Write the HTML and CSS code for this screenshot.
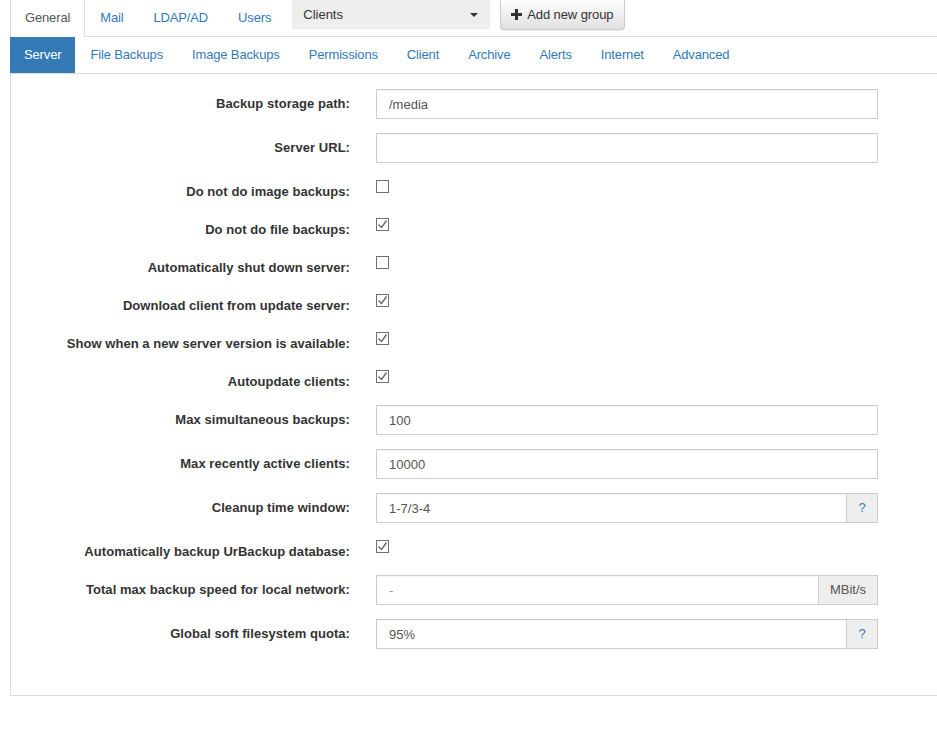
FILE: index.html
```html
<!DOCTYPE html>
<html lang="en">
<head>
    <meta charset="UTF-8">
    <title>UrBackup - Settings</title>
    <link rel="stylesheet" href="styles.css">
</head>
<body>

<div class="top_nav">
    <ul class="tabs">
        <li class="active"><a href="#">General</a></li>
        <li><a href="#">Mail</a></li>
        <li><a href="#">LDAP/AD</a></li>
        <li><a href="#">Users</a></li>
    </ul>
    <div class="group_select">Clients<span class="caret"></span></div>
    <button type="button" class="btn_add">
        <svg class="plus" width="11" height="11" viewBox="0 0 11 11"><path d="M4 0h3v4h4v3H7v4H4V7H0V4h4z" fill="#333"/></svg>
        Add new group
    </button>
</div>

<ul class="pills">
    <li class="active"><a href="#">Server</a></li>
    <li><a href="#">File Backups</a></li>
    <li><a href="#">Image Backups</a></li>
    <li><a href="#">Permissions</a></li>
    <li><a href="#">Client</a></li>
    <li><a href="#">Archive</a></li>
    <li><a href="#">Alerts</a></li>
    <li><a href="#">Internet</a></li>
    <li><a href="#">Advanced</a></li>
</ul>

<div class="panel">
    <form class="settings">
        <div class="field">
            <label>Backup storage path:</label>
            <input type="text" class="text_input" value="/media">
        </div>
        <div class="field">
            <label>Server URL:</label>
            <input type="text" class="text_input" value="">
        </div>
        <div class="field check_row">
            <label>Do not do image backups:</label>
            <span class="check"></span>
        </div>
        <div class="field check_row">
            <label>Do not do file backups:</label>
            <span class="check"><svg width="11" height="11" viewBox="0 0 11 11"><path d="M1.5 5.5l3 3 5-7" fill="none" stroke="#666" stroke-width="1.4"/></svg></span>
        </div>
        <div class="field check_row">
            <label>Automatically shut down server:</label>
            <span class="check"></span>
        </div>
        <div class="field check_row">
            <label>Download client from update server:</label>
            <span class="check"><svg width="11" height="11" viewBox="0 0 11 11"><path d="M1.5 5.5l3 3 5-7" fill="none" stroke="#666" stroke-width="1.4"/></svg></span>
        </div>
        <div class="field check_row">
            <label>Show when a new server version is available:</label>
            <span class="check"><svg width="11" height="11" viewBox="0 0 11 11"><path d="M1.5 5.5l3 3 5-7" fill="none" stroke="#666" stroke-width="1.4"/></svg></span>
        </div>
        <div class="field check_row">
            <label>Autoupdate clients:</label>
            <span class="check"><svg width="11" height="11" viewBox="0 0 11 11"><path d="M1.5 5.5l3 3 5-7" fill="none" stroke="#666" stroke-width="1.4"/></svg></span>
        </div>
        <div class="field">
            <label>Max simultaneous backups:</label>
            <input type="text" class="text_input" value="100">
        </div>
        <div class="field">
            <label>Max recently active clients:</label>
            <input type="text" class="text_input" value="10000">
        </div>
        <div class="field">
            <label>Cleanup time window:</label>
            <div class="input_group">
                <input type="text" class="text_input" value="1-7/3-4">
                <span class="addon help">?</span>
            </div>
        </div>
        <div class="field check_row">
            <label>Automatically backup UrBackup database:</label>
            <span class="check"><svg width="11" height="11" viewBox="0 0 11 11"><path d="M1.5 5.5l3 3 5-7" fill="none" stroke="#666" stroke-width="1.4"/></svg></span>
        </div>
        <div class="field">
            <label>Total max backup speed for local network:</label>
            <div class="input_group">
                <input type="text" class="text_input dim" value="-">
                <span class="addon">MBit/s</span>
            </div>
        </div>
        <div class="field">
            <label>Global soft filesystem quota:</label>
            <div class="input_group">
                <input type="text" class="text_input" value="95%">
                <span class="addon help">?</span>
            </div>
        </div>
    </form>
</div>

</body>
</html>
```

FILE: styles.css
```css
body {
    margin: 0;
    padding-left: 10px;
    font-family: "Liberation Sans", Arial, sans-serif;
    font-size: 13px;
    color: #333;
    background: #fff;
    overflow: hidden;
}

a {
    color: #337ab7;
    text-decoration: none;
}

ul {
    list-style: none;
    margin: 0;
    padding: 0;
}

/* top row: tabs, group select, add button */
.top_nav {
    display: flex;
    align-items: flex-start;
    height: 36px;
    border-bottom: 1px solid #ddd;
}

.tabs {
    display: flex;
}

.tabs li a {
    display: block;
    height: 36px;
    line-height: 36px;
    padding: 0 15px;
    letter-spacing: -0.15px;
}

.tabs li.active a {
    color: #555;
    background: #fff;
    border: 1px solid #ddd;
    border-top: none;
    border-bottom: none;
    height: 37px;
    padding: 0 14px;
}

.group_select {
    position: relative;
    width: 187px;
    height: 29px;
    line-height: 29px;
    margin-left: 6px;
    padding-left: 11px;
    background: #eee;
    color: #333;
}

.caret {
    position: absolute;
    right: 12px;
    top: 13px;
    border-top: 4px solid #333;
    border-left: 4px solid transparent;
    border-right: 4px solid transparent;
}

.btn_add {
    display: flex;
    align-items: center;
    gap: 5px;
    height: 30px;
    margin-left: 10px;
    padding: 0 11px 0 10px;
    font-family: "Liberation Sans", Arial, sans-serif;
    font-size: 13px;
    letter-spacing: -0.1px;
    color: #333;
    border: 1px solid #ccc;
    border-top: none;
    border-radius: 0 0 4px 4px;
    background: linear-gradient(#fff, #e0e0e0);
    box-shadow: 0 1px 1px rgba(0, 0, 0, .08);
}

/* second row: settings pages */
.pills {
    display: flex;
    height: 36px;
    border-bottom: 1px solid #ddd;
}

.pills li a {
    display: block;
    height: 36px;
    line-height: 36px;
    padding: 0 14px 0 15px;
    letter-spacing: -0.15px;
}

.pills li.active a {
    background: #337ab7;
    color: #fff;
    padding: 0 14px;
}

/* settings form */
.panel {
    border-left: 1px solid #ddd;
    border-bottom: 1px solid #ddd;
    padding: 15px 0 46px;
}

.field {
    display: grid;
    grid-template-columns: 339px 502px;
    column-gap: 26px;
    align-items: center;
    margin-bottom: 14px;
}

.field:last-child {
    margin-bottom: 0;
}

.field label {
    text-align: right;
    font-weight: bold;
    line-height: 30px;
    letter-spacing: 0.05px;
}

.check_row {
    align-items: start;
    height: 24px;
}

.check_row label {
    line-height: 20px;
    padding-top: 5px;
}

.check {
    display: flex;
    align-items: center;
    justify-content: center;
    width: 11px;
    height: 11px;
    margin-top: 3px;
    border: 1px solid #707070;
    background: #fff;
}

.text_input {
    box-sizing: border-box;
    width: 100%;
    height: 30px;
    padding: 0 12px;
    font-family: "Liberation Sans", Arial, sans-serif;
    font-size: 13px;
    color: #555;
    border: 1px solid #ccc;
    box-shadow: inset 0 1px 1px rgba(0, 0, 0, .05);
    outline: none;
}

.text_input.dim {
    color: #999;
}

.input_group {
    display: flex;
}

.input_group .text_input {
    flex: 1;
    min-width: 0;
}

.addon {
    box-sizing: border-box;
    height: 30px;
    line-height: 28px;
    padding: 0 11px;
    color: #555;
    background: #eee;
    border: 1px solid #ccc;
    border-left: none;
}

.addon.help {
    width: 31px;
    padding: 0;
    text-align: center;
    color: #337ab7;
}
```
